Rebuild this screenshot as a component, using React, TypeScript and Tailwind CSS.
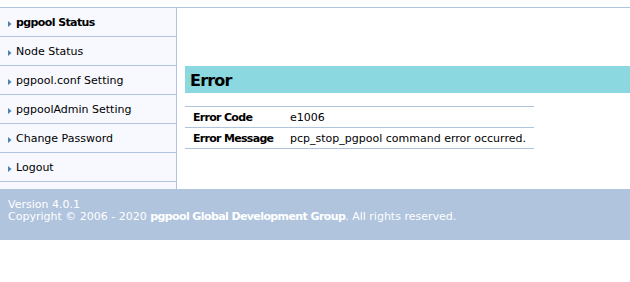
const menu = [
  { label: 'pgpool Status', active: true },
  { label: 'Node Status' },
  { label: 'pgpool.conf Setting' },
  { label: 'pgpoolAdmin Setting' },
  { label: 'Change Password' },
  { label: 'Logout' },
];

function Arrow() {
  return (
    <svg width="4" height="6" viewBox="0 0 4 6" className="shrink-0">
      <path d="M0 0 L3.5 3 L0 6 Z" fill="#4682b4" />
    </svg>
  );
}

export default function App() {
  return (
    <div className="min-h-screen bg-white font-['DejaVu_Sans',Verdana,sans-serif] text-[11px] text-black">
      <div className="h-[7px]" />

      {/* Menu + Contents */}
      <div className="flex border-t border-[#b0c4de]">
        <div className="w-[177px] h-[181px] bg-[#f8f8ff] border-r border-[#b0c4de]">
          {menu.map((m) => (
            <div
              key={m.label}
              className="flex items-center gap-[4px] h-[29px] pl-[8px] pt-[3px] border-b border-[#b0c4de]"
            >
              <Arrow />
              <span className={m.active ? 'font-bold tracking-[-0.6px]' : ''}>{m.label}</span>
            </div>
          ))}
        </div>

        <div className="flex-1 pl-[8px] pt-[58px]">
          <h2 className="h-[27px] flex items-center pl-[5px] pt-[3px] bg-[#8bd8e1] text-[16px] font-bold tracking-[-0.8px]">
            Error
          </h2>
          <table className="mt-[13px] w-[349px] border-collapse whitespace-nowrap">
            <tbody>
              <tr className="h-[21px] border-y border-[#b0c4de]">
                <th className="w-[105px] pl-[8px] pt-[3px] text-left font-bold tracking-[-0.7px]">Error Code</th>
                <td className="pt-[3px]">e1006</td>
              </tr>
              <tr className="h-[21px] border-b border-[#b0c4de]">
                <th className="pl-[8px] pt-[3px] text-left font-bold tracking-[-0.7px]">Error Message</th>
                <td className="pt-[3px]">pcp_stop_pgpool command error occurred.</td>
              </tr>
            </tbody>
          </table>
        </div>
      </div>

      {/* Footer */}
      <div className="h-[51px] bg-[#b0c4de] px-[8px] pt-[10px] leading-[12px] text-white">
        Version 4.0.1
        <br />
        Copyright &copy; 2006 - 2020{' '}
        <span className="font-bold tracking-[-0.6px]">pgpool Global Development Group</span>. All rights reserved.
      </div>
    </div>
  );
}
